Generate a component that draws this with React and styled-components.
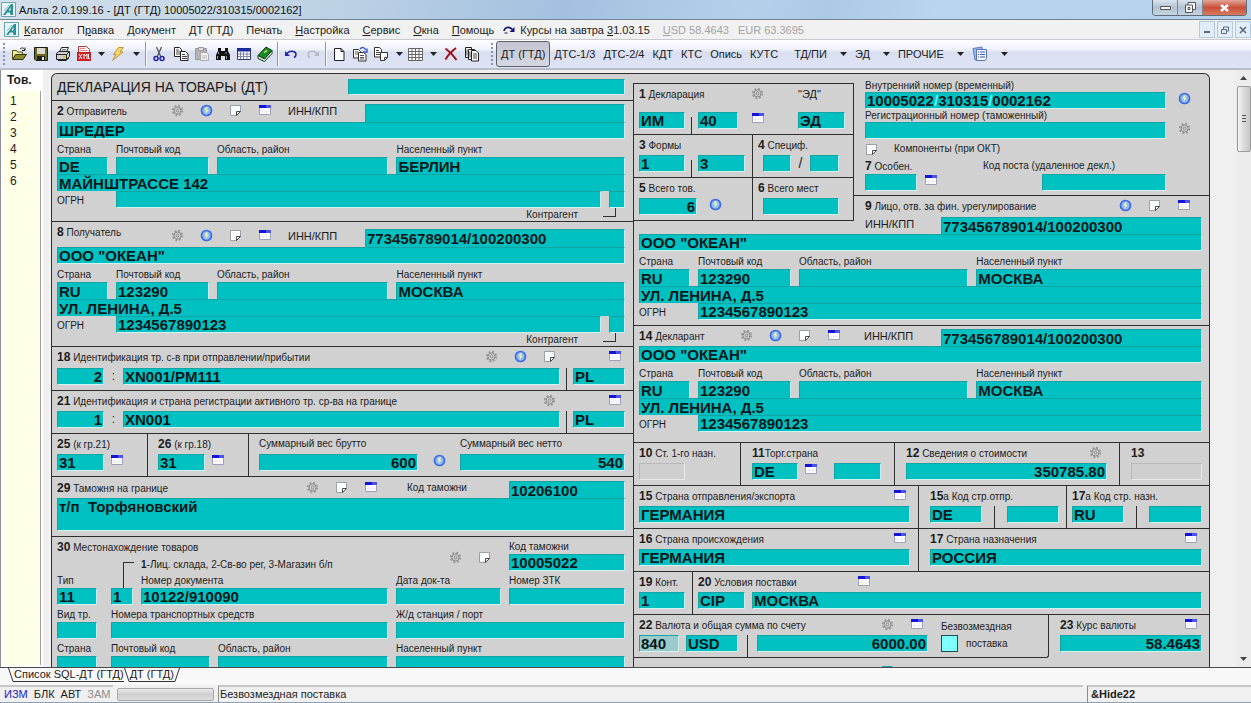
import styled, { createGlobalStyle } from 'styled-components'

const people = {
  sender: {
    name: 'ШРЕДЕР', country: 'DE', city: 'БЕРЛИН', address: 'МАЙНШТРАССЕ 142',
  },
  ocean: {
    inn: '773456789014/100200300', name: 'ООО "ОКЕАН"', country: 'RU', zip: '123290',
    city: 'МОСКВА', address: 'УЛ. ЛЕНИНА, Д.5', ogrn: '1234567890123',
  },
}

const menu = [
  ['К', 'аталог'], ['', 'Правка', 1], ['', 'Документ'], ['', 'ДТ (ГТД)'], ['', 'Печать'],
  ['Н', 'астройка'], ['С', 'ервис'], ['О', 'кна'], ['П', 'омощь'],
]

const goods = [1, 2, 3, 4, 5, 6]

export default function App() {
  return (
    <Window>
      <GlobalStyle />
      <TitleBar>
        <Logo />
        <h1>Альта 2.0.199.16 - [ДТ (ГТД) 10005022/310315/0002162]</h1>
        <WindowButtons>
          <button aria-label="Свернуть"><Glyph name="min" /></button>
          <button aria-label="Развернуть"><Glyph name="max" /></button>
          <button aria-label="Закрыть" className="close"><Glyph name="close" /></button>
        </WindowButtons>
      </TitleBar>
      <MenuBar>
        <Logo />
        {menu.map(([key, rest, mid]) => (
          <button key={rest}>{mid ? <>П<u>р</u>авка</> : <><u>{key}</u>{rest}</>}</button>
        ))}
        <button className="rates"><Glyph name="refresh" /><span>Курсы на завтра <u>3</u>1.03.15</span></button>
        <Rates><span><u>U</u>SD 58.4643</span><span>EUR 63.3695</span></Rates>
        <MdiButtons>
          <button aria-label="Свернуть документ"><Glyph name="mdiMin" /></button>
          <button aria-label="Восстановить документ"><Glyph name="mdiMax" /></button>
          <button aria-label="Закрыть документ"><Glyph name="mdiClose" /></button>
        </MdiButtons>
      </MenuBar>
      <Toolbar />
      <Main>
        <Sidebar>
          <h2>Тов.</h2>
          <ul>{goods.map(n => <li key={n}>{n}</li>)}</ul>
        </Sidebar>
        <Form>
          <LeftColumn />
          <RightColumn />
        </Form>
        <ScrollBar>
          <button aria-label="Вверх"><Glyph name="up" /></button>
          <Thumb><i /><i /><i /></Thumb>
          <button aria-label="Вниз" className="down"><Glyph name="down" /></button>
        </ScrollBar>
      </Main>
      <TabStrip>
        <Slant />
        <button>Список SQL-ДТ (ГТД)</button>
        <Slant />
        <button>ДТ (ГТД)</button>
        <Slant $back />
      </TabStrip>
      <StatusBar>
        <Modes><b>ИЗМ</b><span>БЛК</span><span>АВТ</span><i>ЗАМ</i></Modes>
        <Progress />
        <Hint>Безвозмездная поставка</Hint>
        <Code>&amp;Hide22</Code>
      </StatusBar>
    </Window>
  )
}

function Toolbar() {
  return (
    <Tools>
      <Grip />
      <Tool icon="open" label="Открыть" />
      <Tool icon="save" label="Сохранить" />
      <Tool icon="print" label="Печать" />
      <Tool icon="xml" label="XML" w={20} />
      <Tool icon="arrow" label="Ещё XML" w={14} />
      <Tool icon="bolt" label="Проверка" w={20} />
      <Tool icon="arrow" label="Ещё проверки" w={16} />
      <Divider />
      <Tool icon="cut" label="Вырезать" />
      <Tool icon="copy" label="Копировать" />
      <Tool icon="paste" label="Вставить" w={20} />
      <Tool icon="find" label="Найти" />
      <Tool icon="table" label="Таблица" w={20} />
      <Tool icon="book" label="Справочник" />
      <Divider />
      <Tool icon="undo" label="Отменить" />
      <Tool icon="redo" label="Вернуть" />
      <Divider />
      <Tool icon="page" label="Новый" />
      <Tool icon="pages" label="Копия" w={20} />
      <Tool icon="clone" label="Дублировать" />
      <Tool icon="arrow" label="Ещё копии" w={14} />
      <Tool icon="grid" label="Список" w={20} />
      <Tool icon="arrow" label="Ещё списки" w={14} />
      <Tool icon="cross" label="Удалить" />
      <Tool icon="docs" label="Документы" w={20} />
      <Spacer />
      <Grip />
      <TextTool $active>ДТ (ГТД)</TextTool>
      <TextTool>ДТС-1/3</TextTool>
      <TextTool>ДТС-2/4</TextTool>
      <TextTool>КДТ</TextTool>
      <TextTool>КТС</TextTool>
      <TextTool>Опись</TextTool>
      <TextTool>КУТС</TextTool>
      <Spacer />
      <TextTool>ТД/ПИ<Glyph name="arrow" /></TextTool>
      <TextTool>ЭД<Glyph name="arrow" /></TextTool>
      <TextTool>ПРОЧИЕ<Glyph name="arrow" /></TextTool>
      <TextTool aria-label="Журнал"><Glyph name="journal" /><Glyph name="arrow" /></TextTool>
    </Tools>
  )
}

function Tool({ icon, label, w = 22 }) {
  return <ToolButton $w={w} aria-label={label}><Glyph name={icon} /></ToolButton>
}

function Marks({ names, gap }) {
  return (
    <MarkRow $gap={gap}>
      {names.map(n => <Mark key={n} aria-label={markNames[n]}><Glyph name={n} /></Mark>)}
    </MarkRow>
  )
}

function LeftColumn() {
  return (
    <Column>
      <Banner>
        <h2>ДЕКЛАРАЦИЯ НА ТОВАРЫ (ДТ)</h2>
        <Field aria-label="Номер декларации" $h={16} />
      </Banner>
      <Section>
        <PartyHead id="inn2" num="2" title="Отправитель" />
        <PartyBody id="inn2" data={people.sender} agent />
      </Section>
      <Section>
        <PartyHead id="inn8" num="8" title="Получатель" inn={people.ocean.inn} drop={4} />
        <PartyBody id="inn8" data={people.ocean} agent />
      </Section>
      <Section>
        <Head $h={21}>
          <Label htmlFor="g18"><b>18</b> Идентификация тр. с-в при отправлении/прибытии</Label>
          <Marks names={['gear', 'info', 'note']} />
          <FarMark><Marks names={['cal']} /></FarMark>
        </Head>
        <Row $cols="47px 19px 1fr 13px 52px">
          <Field aria-label="Количество" defaultValue="2" $right />
          <Colon>:</Colon>
          <Field id="g18" defaultValue="XN001/PM111" />
          <Tick />
          <Field aria-label="Страна" defaultValue="PL" />
        </Row>
      </Section>
      <Section>
        <Head>
          <Label htmlFor="g21"><b>21</b> Идентификация и страна регистрации активного тр. ср-ва на границе</Label>
          <Marks names={['gear']} />
          <FarMark><Marks names={['cal']} /></FarMark>
        </Head>
        <Row $cols="47px 19px 1fr 13px 52px">
          <Field aria-label="Количество" defaultValue="1" $right />
          <Colon>:</Colon>
          <Field id="g21" defaultValue="XN001" />
          <Tick />
          <Field aria-label="Страна" defaultValue="PL" />
        </Row>
      </Section>
      <Split $cols="95px 101px 1fr">
        <Box>
          <Head><Label htmlFor="g25"><b>25</b> (к гр.21)</Label></Head>
          <Row $cols="47px 13px" $gap={6}>
            <Field id="g25" defaultValue="31" /><Marks names={['cal']} />
          </Row>
        </Box>
        <Box $l={10}>
          <Head><Label htmlFor="g26"><b>26</b> (к гр.18)</Label></Head>
          <Row $cols="47px 13px" $gap={6}>
            <Field id="g26" defaultValue="31" /><Marks names={['cal']} />
          </Row>
        </Box>
        <Box $l={10} $r={8}>
          <Head>
            <Label htmlFor="gross">Суммарный вес брутто</Label>
            <FixedLabel $w={165} htmlFor="net">Суммарный вес нетто</FixedLabel>
          </Head>
          <Row $cols="1fr 42px 165px">
            <Field id="gross" defaultValue="600" $right />
            <Center><Marks names={['info']} /></Center>
            <Field id="net" defaultValue="540" $right />
          </Row>
        </Box>
      </Split>
      <Section>
        <JoinedHead>
          <Label htmlFor="g29"><b>29</b> Таможня на границе</Label>
          <Marks names={['gear', 'note', 'cal']} gap={30} />
          <FixedLabel $w={102} htmlFor="code29">Код таможни</FixedLabel>
          <ShortField id="code29" $w={116} $joined defaultValue="10206100" />
        </JoinedHead>
        <Memo id="g29" defaultValue="т/п  Торфяновский" />
      </Section>
      <Place>
        <PlaceTop>
          <div>
            <Head><Label htmlFor="doc"><b>30</b> Местонахождение товаров</Label></Head>
            <PlaceHint>
              <Elbow />
              <span><b>1</b>-Лиц. склада, 2-Св-во рег, 3-Магазин б/п</span>
              <Marks names={['gear', 'note']} gap={18} />
            </PlaceHint>
          </div>
          <Cell>
            <Caption>Код таможни</Caption>
            <Field defaultValue="10005022" />
          </Cell>
        </PlaceTop>
        <Cells $cols="46px 22px 1fr 105px 116px">
          <Cell><Caption>Тип</Caption><ShortField $w={40} defaultValue="11" /></Cell>
          <Cell><Stem /><Field aria-label="Вид места" defaultValue="1" /></Cell>
          <Cell><Caption>Номер документа</Caption><Field id="doc" defaultValue="10122/910090" /></Cell>
          <Cell><Caption>Дата док-та</Caption><Field /></Cell>
          <Cell><Caption>Номер ЗТК</Caption><Field /></Cell>
        </Cells>
        <Cells $cols="46px 1fr 229px">
          <Cell><Caption>Вид тр.</Caption><ShortField $w={40} /></Cell>
          <Cell><Caption>Номера транспортных средств</Caption><Field /></Cell>
          <Cell><Caption>Ж/д станция / порт</Caption><Field /></Cell>
        </Cells>
        <Cells $cols="46px 99px 1fr 229px">
          <Cell><Caption>Страна</Caption><ShortField $w={40} /></Cell>
          <Cell><Caption>Почтовый код</Caption><Field /></Cell>
          <Cell><Caption>Область, район</Caption><Field /></Cell>
          <Cell><Caption>Населенный пункт</Caption><Field /></Cell>
        </Cells>
      </Place>
    </Column>
  )
}

function PartyHead({ id, num, title, inn, drop = 0, gap = 17, w = 260, h = 18 }) {
  return (
    <PartyTop>
      <Label htmlFor={id + 'name'}><b>{num}</b> {title}</Label>
      <PartyId $top={drop}>
        <Marks names={['gear', 'info', 'note', 'cal']} gap={gap} />
        <FixedLabel $w={77} $big htmlFor={id}>ИНН/КПП</FixedLabel>
        <ShortField id={id} $w={w} $joined $h={h} defaultValue={inn} />
      </PartyId>
    </PartyTop>
  )
}

function PartyBody({ id, data, agent }) {
  return (
    <>
      <Field id={id + 'name'} aria-label="Наименование" defaultValue={data.name} />
      <Cells $cols="51px 93px 3fr 4fr">
        <Cell><Caption $tall>Страна</Caption><Field $joined defaultValue={data.country} /></Cell>
        <Cell><Caption $tall>Почтовый код</Caption><Field $joined defaultValue={data.zip} /></Cell>
        <Cell><Caption $tall>Область, район</Caption><Field $joined /></Cell>
        <Cell><Caption $tall>Населенный пункт</Caption><Field $joined defaultValue={data.city} /></Cell>
      </Cells>
      <Field aria-label="Адрес" defaultValue={data.address} $joined />
      <OgrnRow $agent={agent}>
        <span>ОГРН</span>
        <Field aria-label="ОГРН" defaultValue={data.ogrn} />
        {agent && <Field aria-label="Контрагент" />}
      </OgrnRow>
      {agent && <Agent>Контрагент<i /></Agent>}
    </>
  )
}

function RightColumn() {
  return (
    <Column>
      <TopGrid>
        <Stats>
          <StatsBox>
            <StatRow $cols="1fr">
              <Box>
                <Head $h={28}>
                  <FixedLabel $w={112} htmlFor="g1"><b>1</b> Декларация</FixedLabel>
                  <Marks names={['gear']} gap={34} />
                  <Label $big htmlFor="ed">"ЭД"</Label>
                </Head>
                <Row $cols="46px 13px 40px 13px 13px 34px 47px">
                  <Field id="g1" defaultValue="ИМ" />
                  <Tick $short />
                  <Field aria-label="Режим" defaultValue="40" />
                  <span />
                  <Marks names={['cal']} />
                  <span />
                  <Field id="ed" defaultValue="ЭД" />
                </Row>
              </Box>
            </StatRow>
            <StatRow $cols="118px 1fr">
              <Box>
                <Head><Label htmlFor="g3"><b>3</b> Формы</Label></Head>
                <Row $cols="46px 13px 47px">
                  <Field id="g3" defaultValue="1" />
                  <Tick $short />
                  <Field aria-label="Всего форм" defaultValue="3" />
                </Row>
              </Box>
              <Box>
                <Head><Label htmlFor="g4"><b>4</b> Специф.</Label></Head>
                <Row $cols="28px 19px 29px" $l={5}>
                  <Field id="g4" />
                  <Slash>/</Slash>
                  <Field aria-label="Всего спецификаций" />
                </Row>
              </Box>
            </StatRow>
            <StatRow $cols="118px 1fr">
              <Box>
                <Head><Label htmlFor="g5"><b>5</b> Всего тов.</Label></Head>
                <Row $cols="58px 13px" $gap={12}>
                  <Field id="g5" defaultValue="6" $right />
                  <Marks names={['info']} />
                </Row>
              </Box>
              <Box>
                <Head><Label htmlFor="g6"><b>6</b> Всего мест</Label></Head>
                <Row $cols="76px" $l={5}><Field id="g6" /></Row>
              </Box>
            </StatRow>
          </StatsBox>
        </Stats>
        <div>
          <Numbers>
            <NumberLabel htmlFor="num1">Внутренний номер (временный)</NumberLabel>
            <NumberRow>
              <Segments>
                <input id="num1" defaultValue="10005022" />/
                <input aria-label="Дата" defaultValue="310315" className="date" />/
                <input aria-label="Порядковый номер" defaultValue="0002162" />
              </Segments>
              <Marks names={['info']} />
            </NumberRow>
            <NumberLabel htmlFor="num2">Регистрационный номер (таможенный)</NumberLabel>
            <NumberRow>
              <Field id="num2" />
              <Marks names={['gear']} />
            </NumberRow>
            <Components>
              <Marks names={['note']} gap={16} />
              Компоненты (при ОКТ)
            </Components>
            <PostLabels>
              <FixedLabel $w={118} htmlFor="g7"><b>7</b> Особен.</FixedLabel>
              <Label htmlFor="post">Код поста (удаленное декл.)</Label>
            </PostLabels>
            <PostFields>
              <ShortField id="g7" $w={52} />
              <Marks names={['cal']} />
              <ShortField id="post" $w={124} />
            </PostFields>
          </Numbers>
          <FinHead>
            <Label htmlFor="inn9"><b>9</b> Лицо, отв. за фин. урегулирование</Label>
            <Marks names={['info', 'note', 'cal']} gap={12} />
          </FinHead>
          <FinId>
            <FixedLabel $w={76} $big htmlFor="inn9">ИНН/КПП</FixedLabel>
            <Field id="inn9" $joined defaultValue={people.ocean.inn} />
          </FinId>
        </div>
      </TopGrid>
      <Lower>
        <Section $b={5}>
          <PartyBody id="inn9" data={people.ocean} />
        </Section>
        <Section $b={10}>
          <PartyHead id="inn14" num="14" title="Декларант" inn={people.ocean.inn} gap={24} w={261} h={17} />
          <PartyBody id="inn14" data={people.ocean} />
        </Section>
        <Split $cols="106px 154px 1fr 90px">
          <Box>
            <Head><Label htmlFor="g10"><b>10</b> Ст. 1-го назн.</Label></Head>
            <Row $cols="46px"><Field id="g10" disabled /></Row>
          </Box>
          <Box $l={11}>
            <Head><Label htmlFor="g11"><b>11</b>Торг.страна</Label></Head>
            <Row $cols="46px 6px 13px 17px 47px">
              <Field id="g11" defaultValue="DE" /><span />
              <Marks names={['cal']} /><span />
              <Field aria-label="Код" />
            </Row>
          </Box>
          <Box $l={11} $r={12}>
            <Head>
              <Label htmlFor="g12"><b>12</b> Сведения о стоимости</Label>
              <Marks names={['gear']} gap={5} />
            </Head>
            <Row $cols="1fr"><Field id="g12" defaultValue="350785.80" $right /></Row>
          </Box>
          <Box $l={11} $r={7}>
            <Head><Label htmlFor="g13"><b>13</b></Label></Head>
            <Row $cols="1fr"><Field id="g13" disabled /></Row>
          </Box>
        </Split>
        <Split $cols="1fr 148px 143px">
          <Box $r={8}>
            <Head>
              <Label htmlFor="g15"><b>15</b> Страна отправления/экспорта</Label>
              <Marks names={['cal']} gap={4} />
            </Head>
            <Row $cols="1fr"><Field id="g15" defaultValue="ГЕРМАНИЯ" /></Row>
          </Box>
          <Box $l={11}>
            <Head><Label htmlFor="g15a"><b>15</b>а Код стр.отпр.</Label></Head>
            <Row $cols="52px 25px 52px">
              <Field id="g15a" defaultValue="DE" /><Tick /><Field aria-label="Регион" />
            </Row>
          </Box>
          <Box>
            <Head><Label htmlFor="g17a"><b>17</b>а Код стр. назн.</Label></Head>
            <Row $cols="52px 25px 53px">
              <Field id="g17a" defaultValue="RU" /><Tick /><Field aria-label="Регион" />
            </Row>
          </Box>
        </Split>
        <Split $cols="1fr 291px">
          <Box $r={8}>
            <Head>
              <Label htmlFor="g16"><b>16</b> Страна происхождения</Label>
              <Marks names={['cal']} gap={4} />
            </Head>
            <Row $cols="1fr"><Field id="g16" defaultValue="ГЕРМАНИЯ" /></Row>
          </Box>
          <Box $l={11} $r={7}>
            <Head>
              <Label htmlFor="g17"><b>17</b> Страна назначения</Label>
              <Marks names={['cal']} gap={5} />
            </Head>
            <Row $cols="1fr"><Field id="g17" defaultValue="РОССИЯ" /></Row>
          </Box>
        </Split>
        <Split $cols="58px 1fr">
          <Box>
            <Head><Label htmlFor="g19"><b>19</b> Конт.</Label></Head>
            <Row $cols="46px"><Field id="g19" defaultValue="1" /></Row>
          </Box>
          <Box $r={7}>
            <Head>
              <FixedLabel $w={159} htmlFor="g20"><b>20</b> Условия поставки</FixedLabel>
              <Marks names={['cal']} />
            </Head>
            <Row $cols="47px 1fr" $gap={7}>
              <Field id="g20" defaultValue="CIP" />
              <Field aria-label="Пункт поставки" defaultValue="МОСКВА" />
            </Row>
          </Box>
        </Split>
        <PriceSplit>
          <PriceBox>
            <div>
              <Head>
                <Label htmlFor="g22"><b>22</b> Валюта и общая сумма по счету</Label>
                <Marks names={['gear', 'cal']} gap={5} />
              </Head>
              <Row $cols="40px 7px 52px 19px 1fr">
                <Field id="g22" defaultValue="840" $pale /><span />
                <Field aria-label="Валюта" defaultValue="USD" />
                <Tick />
                <Field aria-label="Сумма" defaultValue="6000.00" $right />
              </Row>
            </div>
            <Free>
              <span>Безвозмездная</span>
              <span><input type="checkbox" />поставка</span>
            </Free>
          </PriceBox>
          <Box $l={11} $r={7}>
            <Head>
              <Label htmlFor="g23"><b>23</b> Курс валюты</Label>
              <Marks names={['cal']} gap={5} />
            </Head>
            <Row $cols="1fr"><Field id="g23" defaultValue="58.4643" $right /></Row>
          </Box>
        </PriceSplit>
        <NextRow><Field aria-label="Характер сделки" /></NextRow>
      </Lower>
    </Column>
  )
}

const markNames = { gear: 'Настройка', info: 'Сведения', note: 'Примечание', cal: 'Справочник' }

const teal = '#00c1c1'
const line = '#2e2e2e'

const GlobalStyle = createGlobalStyle`
  * { box-sizing: border-box; }

  body {
    margin: 0;
    background: #f0f0f0;
    color: #1c1c1c;
    font: 11px/14px "Liberation Sans", Arial, sans-serif;
  }

  button {
    border: 0;
    padding: 0;
    background: none;
    color: inherit;
    font: inherit;
  }

  h1, h2, ul { margin: 0; padding: 0; font-weight: normal; }
  svg { display: block; }
`

const Window = styled.div`
  display: flex;
  flex-direction: column;
  height: 100vh;
  overflow: hidden;
`

const TitleBar = styled.header`
  display: flex;
  align-items: center;
  height: 20px;
  flex: none;
  padding: 0 4px 0 1px;
  gap: 3px;
  background: linear-gradient(100deg, #d3dfea 0, #bfd3e6 25%, #a3c1df 45%, #b4d0eb 60%, #acc9e6 66%, #b9d5ef 75%, #b4d0ea 100%);
  border-bottom: 1px solid #6f8499;

  h1 {
    flex: 1;
    font-size: 11px;
    line-height: 18px;
    color: #111;
  }
`

const WindowButtons = styled.div`
  display: flex;
  align-self: flex-start;
  height: 16px;
  border: 1px solid #5d6b7a;
  border-top: 0;
  border-radius: 0 0 4px 4px;
  overflow: hidden;

  button {
    width: 25px;
    display: grid;
    place-items: center;
    background: linear-gradient(#d9e4ee, #b3c2d0 50%, #c6d4e1);
    border-right: 1px solid #7b8896;
  }

  .close {
    width: 43px;
    border: 0;
    background: linear-gradient(#e3a598, #c9503a 50%, #d87a5d);
  }
`

const MenuBar = styled.nav`
  display: flex;
  align-items: center;
  height: 19px;
  flex: none;
  padding-left: 4px;
  background: #f1f1f1;

  > svg { margin-right: 5px; }
  > button { margin-right: 13px; white-space: nowrap; }

  .rates {
    display: flex;
    gap: 4px;
    align-items: center;
    margin-left: -4px;
  }
`

const Rates = styled.span`
  display: flex;
  gap: 9px;
  color: #a3a3a3;
`

const MdiButtons = styled.div`
  display: flex;
  gap: 2px;
  margin-left: auto;

  button {
    width: 16px;
    height: 17px;
    display: grid;
    place-items: center;
    background: #e3edf7;
    border: 1px solid #b5c9dd;
  }
`

const Tools = styled.div`
  display: flex;
  align-items: center;
  height: 31px;
  flex: none;
  padding-left: 2px;
  background: linear-gradient(#fdfdff, #f2f4fb 30%, #d9dff1 45%, #dee3f5);
  border-top: 1px solid #c9c9cf;
  border-bottom: 2px solid #b9bcc9;
`

const Grip = styled.span`
  width: 6px;
  height: 24px;
  background: radial-gradient(circle, #8e93a5 1px, transparent 1px) 0 0 / 4px 4px repeat-y;
`

const Divider = styled.span`
  width: 4px;
  height: 24px;
  background: linear-gradient(90deg, transparent 1px, #8f95a5 1px, #8f95a5 2px, #fff 2px, #fff 3px, transparent 3px);
`

const Spacer = styled.span`
  width: 8px;
`

const ToolButton = styled.button`
  width: ${props => props.$w}px;
  height: 24px;
  display: grid;
  place-items: center;
`

const TextTool = styled.button`
  display: flex;
  align-items: center;
  gap: 13px;
  height: ${props => props.$active ? 26 : 24}px;
  padding: 0 ${props => props.$active ? 4 : 3}px;
  white-space: nowrap;
  border: 1px solid ${props => props.$active ? '#5b5f6b' : 'transparent'};
  border-radius: 3px;
  background: ${props => props.$active ? 'linear-gradient(#c3c6d0, #d5d8e3)' : 'none'};
`

const Main = styled.main`
  display: flex;
  flex: 1;
  min-height: 0;
  border-bottom: 1px solid #4b4b4b;
`

const Sidebar = styled.aside`
  display: flex;
  flex-direction: column;
  width: 43px;
  border-left: 1px solid #8d8d95;
  background: #fff;

  h2 {
    padding: 3px 6px;
    height: 21px;
    font-weight: bold;
    font-size: 12px;
  }

  ul {
    flex: 1;
    margin: 0 2px 2px 3px;
    padding: 2px 0 0 6px;
    background: #ffffe8;
    border-right: 1px solid #a0a0a0;
    list-style: none;
    font-size: 12px;
    line-height: 16px;
  }
`

const Form = styled.form`
  display: grid;
  grid-template-columns: 581fr 576fr;
  flex: 1;
  margin: 3px 26px 0 8px;
  border: 1px solid ${line};
  border-bottom: 0;
  border-radius: 6px 6px 0 0;
  background: #d1d1d1;
  overflow: hidden;
  font-size: 10px;
`

const ScrollBar = styled.div`
  display: flex;
  flex-direction: column;
  width: 15px;
  background: #ececec;

  button {
    display: grid;
    place-items: center;
    height: 16px;
  }

  .down { margin-top: auto; }
`

const Thumb = styled.div`
  display: flex;
  flex-direction: column;
  justify-content: center;
  gap: 1px;
  height: 66px;
  margin-left: 1px;
  padding: 0 4px;
  border: 1px solid #9a9a9a;
  border-radius: 2px;
  background: linear-gradient(90deg, #f5f5f5, #dadada 50%, #c6c6c6);

  i { height: 2px; border-top: 1px solid #555; }
`

const Column = styled.div`
  min-width: 0;
`

const Banner = styled.div`
  display: grid;
  grid-template-columns: 291fr 277fr;
  height: 27px;
  padding: 5px 8px 0 5px;
  border-bottom: 1px solid ${line};

  h2 {
    font-size: 14px;
    line-height: 17px;
    white-space: nowrap;
  }
`

const Section = styled.section`
  padding: 0 8px ${props => props.$b || 0}px 5px;
  border-bottom: 1px solid ${line};
`

const Split = styled.div`
  display: grid;
  grid-template-columns: ${props => props.$cols};
  border-bottom: 1px solid ${line};

  > * + * { border-left: 1px solid ${line}; }
`

const Box = styled.div`
  min-width: 0;
  padding: 0 ${props => props.$r || 0}px 0 ${props => props.$l || 5}px;
`

const Head = styled.div`
  display: flex;
  align-items: flex-start;
  height: ${props => props.$h || 20}px;
  padding-top: 3px;
`

const JoinedHead = styled.div`
  display: flex;
  align-items: flex-start;
  padding-top: 4px;
`

const Label = styled.label`
  flex: 1;
  font-size: ${props => props.$big ? 11 : 10}px;
  white-space: nowrap;

  b { font-size: 12px; }
`

const FixedLabel = styled(Label)`
  flex: none;
  width: ${props => props.$w}px;
`

const Row = styled.div`
  display: grid;
  grid-template-columns: ${props => props.$cols};
  column-gap: ${props => props.$gap || 0}px;
  align-items: start;
  height: 22px;
  margin-left: ${props => props.$l || 0}px;
`

const Field = styled.input.attrs({ autoComplete: 'off', spellCheck: false })`
  display: block;
  width: 100%;
  min-width: 0;
  height: ${props => props.$h || 17}px;
  padding: 0 1px;
  border: 1px solid #16a3a4;
  border-right-color: #c4eeee;
  border-bottom: ${props => props.$joined ? '0' : '1px solid #d4f4f4'};
  border-radius: ${props => props.$joined ? '1px 1px 0 0' : '1px'};
  background: ${props => props.$pale ? '#9cc9c9' : teal};
  color: #06181a;
  font: bold 15px/15px "Liberation Sans", Arial, sans-serif;
  text-align: ${props => props.$right ? 'right' : 'left'};

  &:disabled {
    background: #cfcfcf;
    border-color: #b9b9b9 #e8e8e8 #e8e8e8 #b9b9b9;
  }
`

const ShortField = styled(Field)`
  flex: none;
  width: ${props => props.$w}px;
`

const Memo = styled.textarea`
  display: block;
  width: 100%;
  height: 33px;
  margin-bottom: 5px;
  padding: 0 1px;
  border: 1px solid #16a3a4;
  border-right-color: #c4eeee;
  border-bottom-color: #d4f4f4;
  background: ${teal};
  color: #06181a;
  font: bold 15px/16px "Liberation Sans", Arial, sans-serif;
  resize: none;
  overflow: hidden;
`

const MarkRow = styled.span`
  display: flex;
  gap: 16px;
  margin-right: ${props => props.$gap || 0}px;
`

const Mark = styled.button.attrs({ type: 'button' })`
  width: 13px;
  height: 13px;
`

const FarMark = styled.span`
  margin: 0 4px 0 52px;
`

const Center = styled.span`
  justify-self: center;
`

const Colon = styled.span`
  text-align: center;
  font-size: 12px;
  line-height: 17px;
`

const Slash = styled(Colon)`
  font-size: 14px;
`

const Tick = styled.span`
  justify-self: center;
  width: 1px;
  height: ${props => props.$short ? 17 : 22}px;
  margin-top: ${props => props.$short ? 5 : 0}px;
  background: ${line};
`

const PartyTop = styled.div`
  display: flex;
  padding-top: 3px;
`

const PartyId = styled.div`
  display: flex;
  padding-top: ${props => props.$top}px;
`

const Cells = styled.div`
  display: grid;
  grid-template-columns: ${props => props.$cols};
  column-gap: 8px;
`

const Cell = styled.label`
  min-width: 0;
`

const Caption = styled.span`
  display: block;
  height: ${props => props.$tall ? 18 : 17}px;
  padding-top: ${props => props.$tall ? 4 : 3}px;
  white-space: nowrap;
`

const OgrnRow = styled.label`
  display: grid;
  grid-template-columns: 51px 1fr ${props => props.$agent ? '16px' : ''};
  column-gap: 8px;

  span { line-height: 20px; height: 17px; }
`

const Agent = styled.div`
  display: flex;
  justify-content: flex-end;
  gap: 25px;
  height: 13px;
  padding-right: 9px;
  line-height: 13px;

  i {
    width: 13px;
    height: 9px;
    border: solid ${line};
    border-width: 0 1px 1px 0;
  }
`

const Place = styled.section`
  padding: 0 8px 0 5px;
`

const PlaceTop = styled.div`
  display: grid;
  grid-template-columns: 1fr 116px;
`

const PlaceHint = styled.div`
  display: flex;
  height: 14px;
  margin-top: -6px;

  > span:nth-child(2) { flex: 1; padding-top: 7px; white-space: nowrap; }
`

const Elbow = styled.i`
  width: 11px;
  height: 9px;
  margin: 11px 7px 0 66px;
  border: solid ${line};
  border-width: 1px 0 0 1px;
`

const Stem = styled.i`
  display: block;
  width: 1px;
  height: 17px;
  margin-left: 12px;
  background: ${line};
`

const TopGrid = styled.div`
  display: grid;
  grid-template-columns: 221px 1fr;
`

const Stats = styled.div`
  margin-top: 9px;
  border-left: 1px solid ${line};
`

const StatsBox = styled.div`
  border: solid ${line};
  border-width: 1px 1px 0 0;
`

const StatRow = styled(Split)``

const Numbers = styled.div`
  padding: 5px 18px 4px 11px;
  border-bottom: 1px solid ${line};
`

const NumberLabel = styled.label`
  display: block;
  line-height: 13px;
`

const NumberRow = styled.div`
  display: grid;
  grid-template-columns: 1fr 13px;
  column-gap: 12px;
`

const Segments = styled.div`
  display: flex;
  height: 17px;
  padding-left: 1px;
  border: 1px solid #16a3a4;
  border-bottom-color: #d4f4f4;
  border-right-color: #c4eeee;
  background: ${teal};
  color: #5ff5f5;
  font: bold 15px/15px "Liberation Sans", Arial, sans-serif;

  input {
    width: 67px;
    padding: 0;
    border: 0;
    background: none;
    color: #06181a;
    font: inherit;
  }

  .date { width: 50px; }
`

const Components = styled.div`
  display: flex;
  align-items: center;
  height: 20px;
`

const PostLabels = styled.div`
  display: flex;
  height: 15px;
`

const PostFields = styled.div`
  display: flex;
  gap: 7px;
  padding-right: 25px;

  > :last-child { margin-left: auto; }
`

const FinHead = styled.div`
  display: flex;
  height: 21px;
  padding: 3px 7px 0 11px;
`

const FinId = styled.div`
  display: flex;
  padding: 0 7px 0 11px;
`

const Lower = styled.div`
  border-left: 1px solid ${line};

  > section { padding-right: 7px; }
`

const PriceSplit = styled.div`
  display: grid;
  grid-template-columns: 1fr 160px;
`

const PriceBox = styled.div`
  display: grid;
  grid-template-columns: 1fr 107px;
  column-gap: 13px;
  padding-left: 5px;
  border: solid ${line};
  border-width: 0 1px 1px 0;
  border-radius: 0 0 3px 0;
`

const Free = styled.label`
  padding-top: 3px;

  span {
    display: flex;
    align-items: center;
    gap: 8px;
    height: 17px;
  }

  input {
    appearance: none;
    width: 17px;
    height: 17px;
    margin: 0;
    border: 1px solid #1f4d4d;
    background: #80ffff;
  }
`

const NextRow = styled.div`
  width: 11px;
  margin: 8px 0 0 248px;
`

const TabStrip = styled.div`
  display: flex;
  height: 17px;
  flex: none;
  padding-left: 8px;
  background: #f8f8f8;

  button {
    height: 14px;
    border-bottom: 1px solid #333;
    line-height: 13px;
    white-space: nowrap;
  }
`

const StatusBar = styled.footer`
  display: flex;
  height: 18px;
  flex: none;
  gap: 4px;
  border-bottom: 1px solid #8aa0b4;
  background: #f0f0f0;

  > * { border-top: 2px solid #c6c6c6; line-height: 15px; }
`

const Modes = styled.div`
  display: flex;
  gap: 6px;
  width: 113px;
  padding-left: 4px;

  b { font-weight: normal; color: #1a1ad0; }
  i { font-style: normal; color: #8c8c8c; }
`

const Progress = styled.div`
  width: 97px;
  height: 13px;
  margin-top: 3px;
  border: 1px solid #a8a8a8 !important;
  border-radius: 2px;
  background: linear-gradient(#e9e9e9, #cfcfcf 50%, #dedede);
`

const Hint = styled.div`
  flex: 1;
  padding-left: 1px;
  border-left: 1px solid #8c8c8c;
`

const Code = styled.div`
  width: 164px;
  padding-left: 3px;
  border-left: 1px solid #8c8c8c;
  font-weight: bold;
`

function Slant({ $back }) {
  return (
    <svg width="6" height="14" viewBox="0 0 6 14" fill="none" stroke="#333">
      <path d={$back ? 'M5.5 0L1 13.5H0' : 'M.5 0L5 13.5H6'} />
    </svg>
  )
}

function Logo() {
  return (
    <svg width="15" height="15" viewBox="0 0 15 15">
      <path d="M.5.5h14v14H.5z" fill="#e6f4f5" stroke="#6aa5ad" />
      <path d="M2 13h2.500l1.500-2.500h3L9.500 13H12V2H10z" fill="#2a8f98" />
      <path d="M7.500 8.500H9.500V5z" fill="#f1fbfb" />
      <path d="M3 9l5-6" stroke="#7ac2c7" />
    </svg>
  )
}

function Glyph({ name }) {
  const [w, h, art] = glyphs[name]
  return <svg width={w} height={h} viewBox={`0 0 ${w} ${h}`} fill="none">{art}</svg>
}

const glyphs = {
  gear: [13, 13, <>
    <circle cx="6.500" cy="6.500" r="4.700" stroke="#999" strokeWidth="2" strokeDasharray="1.900 1.800" />
    <circle cx="6.500" cy="6.500" r="3.500" stroke="#8a8a8a" />
    <circle cx="6.500" cy="6.500" r="1.400" stroke="#8a8a8a" />
  </>],
  info: [13, 13, <>
    <circle cx="6.500" cy="6.500" r="5" fill="#8fbcf2" stroke="#3f68e6" strokeWidth="1.700" />
    <path d="M6 3.500L4.500 6.500H6L5.500 10 8.500 6H7L8 3.500z" fill="#f3f3a6" />
  </>],
  note: [13, 13, <>
    <path d="M1.500 1.500h10v6l-4 4h-6z" fill="#fbfdff" stroke="#9aa0a6" />
    <path d="M11.500 7.500h-4v4z" fill="#fff" stroke="#4a4a4a" />
  </>],
  cal: [13, 13, <>
    <path d="M1.500 1.500h11v9h-11z" fill="#fcfcff" stroke="#9da2b8" />
    <path d="M1 1h7v3H1z" fill="#1414d8" /><path d="M8 1h5v3H8z" fill="#4a52ea" />
    <path d="M2 7.500h10M4.500 5v5M9 5v5" stroke="#eeeefa" />
  </>],
  min: [11, 6, <path d="M.5 1.500h10v3H.5z" fill="#fff" stroke="#4d5660" />],
  max: [11, 11, <>
    <path d="M3 .5h7.500v7H3z" fill="#fff" stroke="#4d5660" />
    <path d="M.5 3h7v7.500h-7z" fill="#fff" stroke="#4d5660" /><path d="M3 5.500h2v2H3z" stroke="#4d5660" />
  </>],
  close: [11, 10, <path d="M2 2l7 6M9 2l-7 6" stroke="#fff" strokeWidth="2.600" />],
  mdiMin: [8, 8, <path d="M1 6h6" stroke="#5a6b80" strokeWidth="2" />],
  mdiMax: [8, 8, <path d="M2.500 3V1h5v4h-2M.5 3.500h5v4h-5z" stroke="#5a6b80" />],
  mdiClose: [8, 8, <path d="M1 1l6 6M7 1L1 7" stroke="#5a6b80" strokeWidth="1.600" />],
  refresh: [13, 9, <>
    <path d="M1 6C1.500 2 6 1 9.500 4.500" stroke="#15157a" strokeWidth="1.600" />
    <path d="M11.500 2v5H6.500z" fill="#15157a" /><path d="M1.500 8h3" stroke="#15157a" />
  </>],
  up: [7, 4, <path d="M0 4l3.500-4L7 4z" fill="#444" />],
  down: [7, 4, <path d="M0 0l3.500 4L7 0z" fill="#444" />],
  arrow: [7, 4, <path d="M0 0h7L3.500 4z" fill="#222" />],
  open: [16, 16, <>
    <path d="M1.500 13V4.500h4l1 1.500h5v3" fill="#f3efa0" stroke="#55551a" />
    <path d="M1.500 13.500l3-5h11l-3.500 5z" fill="#8c8a2a" stroke="#33330c" />
    <path d="M9 3c2-2 4-1 5 1m0-2.500V4.500h-3" stroke="#222" />
  </>],
  save: [16, 16, <>
    <path d="M1.500 1.500h13v13H3l-1.500-1.500z" fill="#6c6c20" stroke="#1c1c10" />
    <path d="M4 2h8v6H4z" fill="#d9d9d2" /><path d="M4 10h8v4.500H4z" fill="#20201c" /><path d="M9 11h2v3H9z" fill="#e8e8e8" />
  </>],
  print: [16, 16, <>
    <path d="M4.500 6l2-4.500h7l-2 4.500" fill="#fff" stroke="#222" />
    <path d="M7 3.500h4M6.500 5h4" stroke="#777" />
    <path d="M1.500 7.500L4 5.500h10.500v5l-3 3h-10z" fill="#cfcfcf" stroke="#222" />
    <path d="M1.500 8.500h10v5M11.500 8.500l3-3M3 14.500h8l3-2.500" stroke="#222" />
    <path d="M8 11h2" stroke="#c9b800" strokeWidth="1.500" />
  </>],
  xml: [16, 16, <>
    <path d="M2.500.5h8l3 3v11h-11z" fill="#f4f4f4" stroke="#b33" />
    <path d="M4 2.500h5M4 4.500h7" stroke="#d88" />
    <path d="M1 6h14v9H1z" fill="#c81f25" />
    <path d="M3 8l3 5M6 8l-3 5M8 13V8l1.500 2L11 8v5M12.500 8v4.500H14" stroke="#fff" />
  </>],
  bolt: [16, 16, <path d="M8.500 1.500h5L10 6h3L2.500 14.500 6 8.500H3.500z" fill="#f8d66a" stroke="#c99232" />],
  cut: [16, 16, <>
    <path d="M5.500 1l4 9M10.500 1l-4 9" stroke="#555" strokeWidth="1.300" />
    <circle cx="5" cy="12.500" r="2" stroke="#2020a0" strokeWidth="1.500" />
    <circle cx="11" cy="12.500" r="2" stroke="#2020a0" strokeWidth="1.500" />
  </>],
  copy: [16, 16, <>
    <path d="M1.500 1.500h5l2 2v7h-7z" fill="#fff" stroke="#222" />
    <path d="M7.500 5.500h5l2.500 2.500v6.500h-7.500z" fill="#fff" stroke="#222" />
    <path d="M3 4h3M3 6h4M3 8h4M9 8.500h3M9 10.500h5M9 12.500h5" stroke="#444" />
  </>],
  paste: [16, 16, <>
    <path d="M1.500 2.500h11v11h-11z" fill="#b4b4b4" stroke="#999" /><path d="M4.500 1.500h5v3h-5z" fill="#ddd" stroke="#999" />
    <path d="M6.500 6.500h6l2 2v6h-8z" fill="#eee" stroke="#aaa" /><path d="M8 10h5M8 12h5" stroke="#bbb" />
  </>],
  find: [16, 16, <>
    <path d="M3 2h3v3h4V2h3v3l2 4v5h-5v-4H6v4H1V9l2-4z" fill="#111" />
    <path d="M3.500 6v2M11 6v2M2.500 10v3M11.500 10v3" stroke="#999" />
  </>],
  table: [16, 16, <>
    <path d="M1.500 2.500h13v11h-13z" fill="#fff" stroke="#333c66" /><path d="M1 2h14v3.500H1z" fill="#1a2c9a" />
    <path d="M4.500 6v7M7.500 6v7M11 6v7M2 8h12M2 10.500h12" stroke="#8088a8" />
  </>],
  book: [16, 16, <>
    <path d="M1 9.500L9 1l6 3.500L7.500 13z" fill="#178a2c" stroke="#0a3d12" />
    <path d="M1 9.500v3l6.500 3 7.500-8V4.500L7.500 13z" fill="#e9e9e0" stroke="#0a3d12" />
    <path d="M7 6.500l3-2" stroke="#d7e86a" strokeWidth="1.500" />
  </>],
  undo: [16, 12, <>
    <path d="M3 7c2-5 10-5 10-.5 0 2-1 2.500-2 3" stroke="#2727a6" strokeWidth="1.600" />
    <path d="M2 3v5h5z" fill="#2727a6" />
  </>],
  redo: [16, 12, <>
    <path d="M13 7C11 2 3 2 3 6.500c0 2 1 2.500 2 3" stroke="#b5b8c4" strokeWidth="1.600" />
    <path d="M14 3v5H9z" fill="#b5b8c4" />
  </>],
  page: [16, 16, <path d="M3.500 2.500h6.500l3 3v9H3.500zM10 2.500v3h3" fill="#fff" stroke="#222" />],
  pages: [16, 16, <>
    <path d="M1.500 3.500h5l2 2v6.500h-7z" fill="#fff" stroke="#333" />
    <path d="M6.500 6.500h5l2.500 2v6.500H6.500z" fill="#fff" stroke="#333" />
    <path d="M3 6h3M3 8h3M8 9.500h4M8 11.500h4M8 13h4" stroke="#555" />
    <path d="M8 3c2-2.500 5-1.500 5.500 1m1.500-1.500v3.500h-4" stroke="#3558c8" strokeWidth="1.400" />
  </>],
  clone: [16, 16, <>
    <path d="M1.500 1.500h5l2 2v7.500h-7z" fill="#fff" stroke="#333" />
    <path d="M7.500 6.500h7v5l-3 3h-4z" fill="#fff" stroke="#333" />
    <path d="M3 4.500h3M3 6.500h4M3 8.500h4M14.500 11.500h-3v3" stroke="#444" />
  </>],
  grid: [16, 13, <path d="M.5.5h14v12H.5zM.5 3.500h14M.5 6.500h14M.5 9.500h14M4 .5v12M7.500 .5v12M11 .5v12" fill="#fff" stroke="#666" />],
  cross: [14, 14, <path d="M1.500 1.500C5 4 10 9 12.500 13M12 1C8 4 4 8 1.500 12.500" stroke="#9c1218" strokeWidth="2" />],
  docs: [16, 16, <>
    <path d="M1.500 1.500h6v10h-6z" fill="#fff" stroke="#222" /><path d="M4.500 3.500h6v10h-6z" fill="#fff" stroke="#222" />
    <path d="M7.500 4.500h4.500l2.500 2.500v8h-7z" fill="#fff" stroke="#222" />
    <path d="M3 3.500v6M6 5.500v6M9 8h4M9 10h4M9 12h4" stroke="#444" />
  </>],
  journal: [16, 16, <>
    <path d="M1 2.500l9-1.500 1 11-8 2z" fill="#9db8ea" stroke="#5c7cc4" />
    <path d="M4.500 3.500h10v9l-1.500 2h-8.500z" fill="#f2f6ff" stroke="#5470b8" />
    <path d="M6 6h1M8 6h5M6 8.500h1M8 8.500h5M6 11h1M8 11h5" stroke="#3853ac" />
  </>],
}
